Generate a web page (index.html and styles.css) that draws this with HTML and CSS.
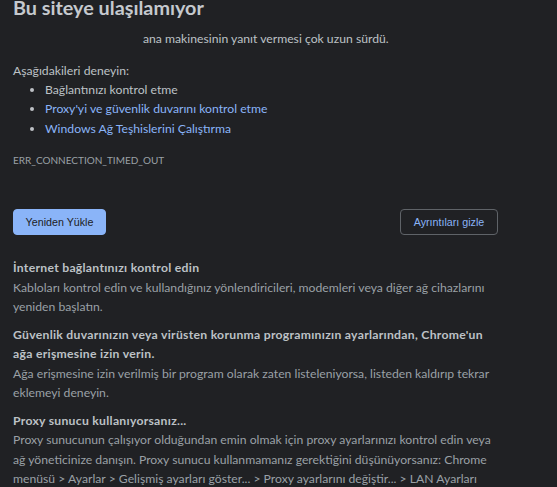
FILE: index.html
```html
<!DOCTYPE html>
<html lang="tr">

<head>
  <meta charset="utf-8">
  <title>Bu siteye ulaşılamıyor</title>
  <link rel="stylesheet" href="styles.css">
</head>

<body>
  <div class="interstitial">
    <h1>Bu siteye ulaşılamıyor</h1>
    <p class="summary">ana makinesinin yanıt vermesi çok uzun sürdü.</p>

    <div class="suggestions">
      <p>Aşağıdakileri deneyin:</p>
      <ul>
        <li>Bağlantınızı kontrol etme</li>
        <li><a href="#">Proxy'yi ve güvenlik duvarını kontrol etme</a></li>
        <li><a href="#">Windows Ağ Teşhislerini Çalıştırma</a></li>
      </ul>
    </div>

    <div class="error-code">ERR_CONNECTION_TIMED_OUT</div>

    <div class="nav-wrapper">
      <button class="btn primary">Yeniden Yükle</button>
      <button class="btn secondary">Ayrıntıları gizle</button>
    </div>

    <div class="details">
      <div class="detail">
        <p class="detail-title">İnternet bağlantınızı kontrol edin</p>
        <p>Kabloları kontrol edin ve kullandığınız yönlendiricileri, modemleri veya diğer ağ cihazlarını yeniden başlatın.</p>
      </div>
      <div class="detail">
        <p class="detail-title">Güvenlik duvarınızın veya virüsten korunma programınızın ayarlarından, Chrome'un ağa erişmesine izin verin.</p>
        <p>Ağa erişmesine izin verilmiş bir program olarak zaten listeleniyorsa, listeden kaldırıp tekrar eklemeyi deneyin.</p>
      </div>
      <div class="detail">
        <p class="detail-title">Proxy sunucu kullanıyorsanız...</p>
        <p>Proxy sunucunun çalışıyor olduğundan emin olmak için proxy ayarlarınızı kontrol edin veya ağ yöneticinize danışın. Proxy sunucu kullanmamanız gerektiğini düşünüyorsanız: Chrome menüsü &gt; Ayarlar &gt; Gelişmiş ayarları göster... &gt; Proxy ayarlarını değiştir... &gt; LAN Ayarları</p>
      </div>
    </div>
  </div>
</body>

</html>
```

FILE: styles.css
```css
html {
  background: #202124;
  font-family: Lato, 'Noto Sans', sans-serif;
}

body {
  margin: 0;
  overflow: hidden;
  color: #9aa0a6;
  font-size: 12.2px;
}

.interstitial {
  width: 490px;
  padding-left: 13px;
}

h1 {
  margin: -5px 0 0;
  font-size: 19.8px;
  font-weight: 700;
  line-height: 24px;
  color: #c5c9ce;
}

p {
  margin: 0;
}

.summary {
  margin-top: 10px;
  padding-left: 130px;
  line-height: 20px;
  color: #bdc1c6;
}

.suggestions {
  margin-top: 12px;
  line-height: 19.5px;
  color: #bdc1c6;
}

.suggestions ul {
  margin: -1px 0 0;
  padding-left: 32px;
}

.suggestions a {
  color: #8ab4f8;
  text-decoration: none;
}

.error-code {
  margin-top: 15px;
  font-size: 10px;
  line-height: 14px;
  color: #9aa0a6;
}

.nav-wrapper {
  display: flex;
  justify-content: space-between;
  margin-top: 42px;
  width: 485px;
}

.btn {
  height: 26px;
  padding: 0;
  border-radius: 4px;
  white-space: nowrap;
  font-family: 'Liberation Sans', Arial, sans-serif;
  font-size: 10.7px;
}

.primary {
  width: 93px;
  background: #8ab4f8;
  border: 1px solid #8ab4f8;
  color: #202124;
}

.secondary {
  width: 98px;
  background: transparent;
  border: 1px solid #5f6368;
  color: #8ab4f8;
}

.details {
  margin-top: 23px;
  line-height: 19.5px;
}

.detail {
  margin-bottom: 8px;
}

.detail-title {
  font-weight: 700;
  letter-spacing: 0.28px;
  color: #bdc1c6;
}
```
